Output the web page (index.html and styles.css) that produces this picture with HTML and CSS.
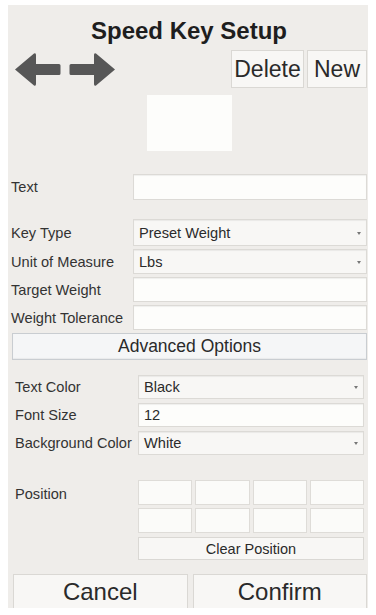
FILE: index.html
```html
<!DOCTYPE html>
<html>
<head>
<meta charset="utf-8">
<link rel="stylesheet" href="styles.css">
</head>
<body>
<div class="panel">
  <div class="title">Speed Key Setup</div>
  <div class="toolbar">
    <div class="arrows">
      <svg class="arrow" width="47" height="35" viewBox="0 0 47 35"><path d="M1 17.5 L20 1.5 Q22 0.5 22 3 L22 12 L45 12 Q46.5 12 46.5 13.5 L46.5 21.5 Q46.5 23 45 23 L22 23 L22 32 Q22 34.5 20 33.5 Z" fill="#575757"/></svg>
      <svg class="arrow" width="47" height="35" viewBox="0 0 47 35"><path d="M46 17.5 L27 1.5 Q25 0.5 25 3 L25 12 L2 12 Q0.5 12 0.5 13.5 L0.5 21.5 Q0.5 23 2 23 L25 23 L25 32 Q25 34.5 27 33.5 Z" fill="#575757"/></svg>
    </div>
    <div class="tbtns">
      <div class="btn big delete">Delete</div>
      <div class="btn big new">New</div>
    </div>
  </div>
  <div class="preview"></div>

  <div class="form1">
    <div class="lbl">Text</div><div class="field"></div>
  </div>
  <div class="form2">
    <div class="lbl">Key Type</div><div class="field sel">Preset Weight<span class="caret"></span></div>
    <div class="lbl">Unit of Measure</div><div class="field sel">Lbs<span class="caret"></span></div>
    <div class="lbl">Target Weight</div><div class="field"></div>
    <div class="lbl">Weight Tolerance</div><div class="field"></div>
  </div>
  <div class="btn adv">Advanced Options</div>

  <div class="form3">
    <div class="lbl">Text Color</div><div class="field sel">Black<span class="caret"></span></div>
    <div class="lbl">Font Size</div><div class="field">12</div>
    <div class="lbl">Background Color</div><div class="field sel">White<span class="caret"></span></div>
  </div>

  <div class="posrow">
    <div class="lbl poslbl">Position</div>
    <div class="posgrid">
      <div class="cell"></div><div class="cell"></div><div class="cell"></div><div class="cell"></div>
      <div class="cell"></div><div class="cell"></div><div class="cell"></div><div class="cell"></div>
      <div class="btn clear">Clear Position</div>
    </div>
  </div>

  <div class="bottom">
    <div class="btn big action">Cancel</div>
    <div class="btn big action">Confirm</div>
  </div>
</div>
</body>
</html>
```

FILE: styles.css
```css
html, body {
  margin: 0;
  padding: 0;
  background: #ffffff;
}
body {
  font-family: "Liberation Sans", Arial, sans-serif;
  color: #2b2b2b;
}
.panel {
  width: 360px;
  height: 603px;
  margin: 5px 0 0 8px;
  background: #efedea;
  box-sizing: border-box;
  padding: 11px 1px 0 3px;
  display: flex;
  flex-direction: column;
}
.title {
  height: 30px;
  line-height: 30px;
  font-size: 24px;
  font-weight: bold;
  color: #1e1e1e;
  text-align: center;
}
.toolbar {
  margin-top: 4px;
  height: 38px;
  display: flex;
  justify-content: space-between;
  align-items: center;
}
.arrows {
  display: flex;
  gap: 8px;
  margin-left: 3px;
}
.arrow {
  display: block;
}
.tbtns {
  display: flex;
  gap: 3px;
  height: 38px;
}
.btn {
  background: #f8f7f5;
  border: 1px solid #dad8d4;
  box-sizing: border-box;
  text-align: center;
  color: #2a2a2a;
}
.big {
  font-size: 23px;
  line-height: 36px;
}
.delete {
  width: 73px;
}
.new {
  width: 60px;
}
.preview {
  margin: 7px 0 0 136px;
  width: 85px;
  height: 59px;
  background: #fdfdfb;
}
.lbl {
  font-size: 14.6px;
  color: #333;
  white-space: nowrap;
}
.field {
  background: #fdfdfb;
  border: 1px solid #dcdad6;
  box-shadow: inset 0 1px 1px rgba(0,0,0,0.06);
  box-sizing: border-box;
  font-size: 14.6px;
  padding-left: 5px;
  display: flex;
  align-items: center;
  position: relative;
  color: #2b2b2b;
}
.sel {
  background: #f8f7f5;
}
.caret {
  position: absolute;
  right: 5px;
  top: 50%;
  margin-top: -1px;
  width: 0;
  height: 0;
  border-left: 2px solid transparent;
  border-right: 2px solid transparent;
  border-top: 3px solid #777;
}
.form1 {
  margin-top: 23px;
  display: grid;
  grid-template-columns: 122px 1fr;
  grid-auto-rows: 26px;
  align-items: center;
}
.form1 .field, .form2 .field, .form3 .field {
  height: 100%;
}
.form2 {
  margin-top: 19px;
  display: grid;
  grid-template-columns: 122px 1fr;
  grid-template-rows: 27px 25px 25px 25px;
  row-gap: 3px;
  align-items: center;
}
.adv {
  margin: 3px 0 0 1px;
  height: 27px;
  line-height: 25px;
  font-size: 17.5px;
  background: #f5f6f7;
  border-color: #c9cdd1;
  box-shadow: inset 0 -1px 1px rgba(0,0,0,0.05);
}
.form3 {
  margin: 15px 3px 0 4px;
  display: grid;
  grid-template-columns: 123px 1fr;
  grid-template-rows: 24px 24px 24px;
  row-gap: 4px;
  align-items: center;
}
.posrow {
  margin: 25px 3px 0 4px;
  display: grid;
  grid-template-columns: 123px 1fr;
}
.poslbl {
  margin-top: 6px;
}
.posgrid {
  display: grid;
  grid-template-columns: repeat(4, 1fr);
  grid-template-rows: 25px 25px 24px;
  gap: 3px;
}
.cell {
  background: #fbfbf9;
  border: 1px solid #dedcd8;
  box-sizing: border-box;
}
.clear {
  grid-column: 1 / 5;
  font-size: 14.5px;
  line-height: 22px;
  margin-top: 1px;
}
.bottom {
  margin: 14px 0 0 2px;
  display: grid;
  grid-template-columns: 1fr 1fr;
  gap: 5px;
}
.action {
  height: 34px;
  line-height: 33px;
  font-size: 24px;
  border-bottom: none;
}
```
